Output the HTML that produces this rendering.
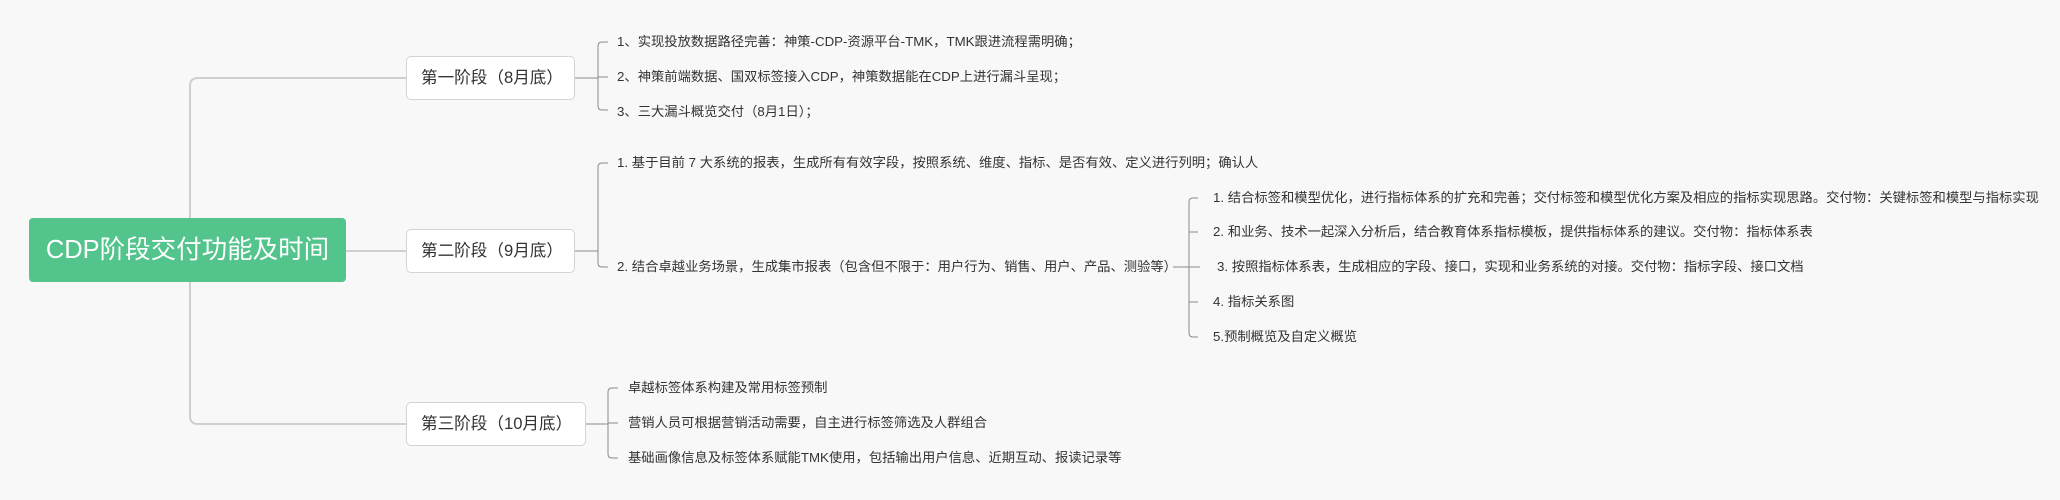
<!DOCTYPE html>
<html><head><meta charset="utf-8"><style>
body{margin:0;width:2060px;height:500px;background:#f8f8f8;position:relative;overflow:hidden;font-family:"Liberation Sans","Noto Sans CJK SC",sans-serif;}
.t{position:absolute;white-space:nowrap;font-size:13.3px;color:#333;line-height:16px;}
.n{position:absolute;background:#fff;border:1px solid #d4d4d4;border-radius:5px;box-sizing:border-box;font-size:16.6px;color:#333;line-height:42px;padding-left:14px;white-space:nowrap;}
.root{position:absolute;left:29px;top:218px;width:317px;height:64px;background:#52c48c;border-radius:4px;color:#fff;font-size:25.5px;line-height:64px;text-align:center;white-space:nowrap;}
</style></head><body>
<svg width="2060" height="500" style="position:absolute;left:0;top:0" fill="none">
<g stroke="#cfcfcf" stroke-width="2">
<path d="M190 218 V86 Q190 78 198 78 H406"/>
<path d="M190 282 V416 Q190 424 198 424 H406"/>
<path d="M346 251 H406"/>
</g>
<g stroke="#8a8a8a" stroke-width="1">
<path d="M575 78 H598"/><path d="M608 42 H602 Q598 42 598 46 V106 Q598 110 602 110 H608"/><path d="M598 77 H608"/>
<path d="M575 251 H598"/><path d="M608 163 H602 Q598 163 598 167 V263 Q598 267 602 267 H608"/>
<path d="M1173 267 H1200"/>
<path d="M1198 198 H1193 Q1189 198 1189 202 V333 Q1189 337 1193 337 H1198"/><path d="M1189 232 H1198"/><path d="M1189 302 H1198"/><path d="M1189 267 H1200"/>
<path d="M586 424 H608"/><path d="M618 388 H612 Q608 388 608 392 V454 Q608 458 612 458 H618"/><path d="M608 423 H618"/>
</g>
</svg>
<div class="root">CDP阶段交付功能及时间</div>
<div class="n" style="left:406px;top:56px;width:169px;height:44px">第一阶段（8月底）</div>
<div class="n" style="left:406px;top:229px;width:169px;height:44px">第二阶段（9月底）</div>
<div class="n" style="left:406px;top:402px;width:180px;height:44px">第三阶段（10月底）</div>
<div class="t" style="left:617px;top:34px">1、实现投放数据路径完善：神策-CDP-资源平台-TMK，TMK跟进流程需明确；</div>
<div class="t" style="left:617px;top:69px">2、神策前端数据、国双标签接入CDP，神策数据能在CDP上进行漏斗呈现；</div>
<div class="t" style="left:617px;top:104px">3、三大漏斗概览交付（8月1日）；</div>
<div class="t" style="left:617px;top:155px">1. 基于目前 7 大系统的报表，生成所有有效字段，按照系统、维度、指标、是否有效、定义进行列明；确认人</div>
<div class="t" style="left:617px;top:259px">2. 结合卓越业务场景，生成集市报表（包含但不限于：用户行为、销售、用户、产品、测验等）</div>
<div class="t" style="left:1213px;top:190px">1. 结合标签和模型优化，进行指标体系的扩充和完善；交付标签和模型优化方案及相应的指标实现思路。交付物：关键标签和模型与指标实现</div>
<div class="t" style="left:1213px;top:224px">2. 和业务、技术一起深入分析后，结合教育体系指标模板，提供指标体系的建议。交付物：指标体系表</div>
<div class="t" style="left:1217px;top:259px">3. 按照指标体系表，生成相应的字段、接口，实现和业务系统的对接。交付物：指标字段、接口文档</div>
<div class="t" style="left:1213px;top:294px">4. 指标关系图</div>
<div class="t" style="left:1213px;top:329px">5.预制概览及自定义概览</div>
<div class="t" style="left:628px;top:380px">卓越标签体系构建及常用标签预制</div>
<div class="t" style="left:628px;top:415px">营销人员可根据营销活动需要，自主进行标签筛选及人群组合</div>
<div class="t" style="left:628px;top:450px">基础画像信息及标签体系赋能TMK使用，包括输出用户信息、近期互动、报读记录等</div>
</body></html>
